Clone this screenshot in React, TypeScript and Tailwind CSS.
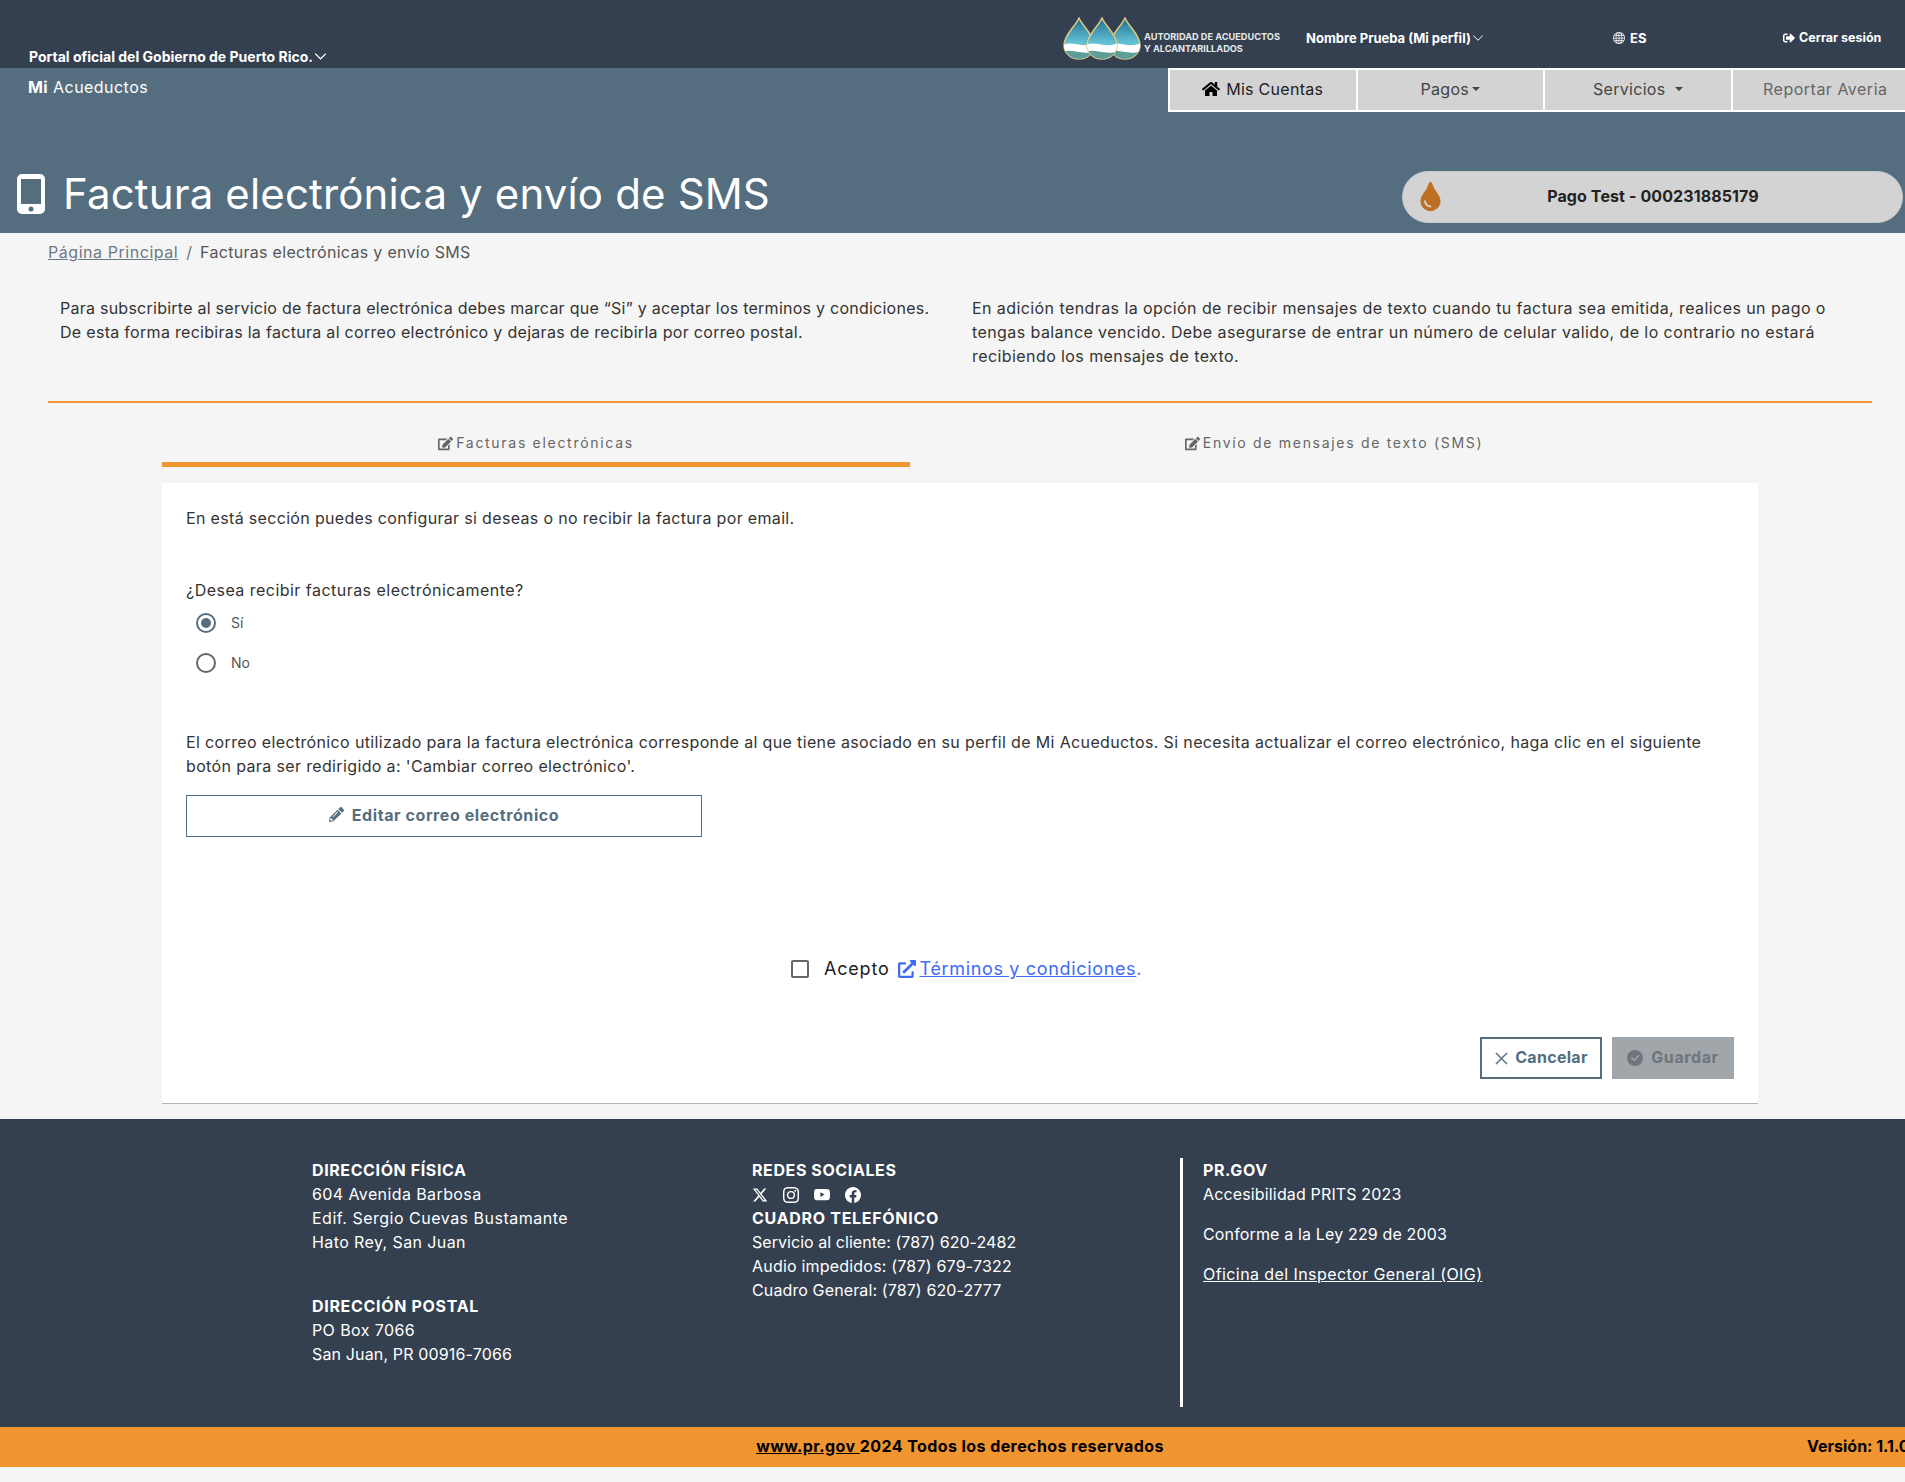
import { BsCheckCircleFill, BsChevronDown, BsFacebook, BsGlobe, BsInstagram, BsXLg, BsYoutube } from "react-icons/bs"
import { FaEdit, FaExternalLinkAlt, FaHome, FaPencilAlt, FaSignOutAlt, FaTint } from "react-icons/fa"
import { FaXTwitter } from "react-icons/fa6"

function Logo() {
  const drops = [16, 62, 39]
  return (
    <svg width="78" height="44" viewBox="0 0 78 44" className="shrink-0">
      <defs>
        <linearGradient id="drop" x1="0" y1="0" x2="0" y2="1">
          <stop offset="0" stopColor="#1f6f93" />
          <stop offset="0.62" stopColor="#66c3d6" />
        </linearGradient>
      </defs>
      {drops.map((cx) => {
        const d = `M${cx} 1 C${cx + 4} 10 ${cx + 15} 18 ${cx + 15} 28 A15 14 0 0 1 ${cx - 15} 28 C${cx - 15} 18 ${cx - 4} 10 ${cx} 1 Z`
        return (
          <g key={cx}>
            <clipPath id={`c${cx}`}>
              <path d={d} />
            </clipPath>
            <path d={d} fill="url(#drop)" stroke="#dcc67e" strokeWidth="1.6" />
            <g clipPath={`url(#c${cx})`}>
              <path d={`M${cx - 16} 28 C${cx - 8} 23 ${cx + 4} 32 ${cx + 16} 26 V44 H${cx - 16} Z`} fill="#ffffff" />
              <path d={`M${cx - 16} 35 C${cx - 8} 31 ${cx + 4} 39 ${cx + 16} 34 V44 H${cx - 16} Z`} fill="#5f9d98" />
            </g>
          </g>
        )
      })}
    </svg>
  )
}

function NavItem({ children, className }: { children: React.ReactNode; className: string }) {
  return (
    <div className={`flex h-full w-[187.5px] items-center justify-center border-l-2 border-white pb-[2px] text-[16px] tracking-[0.3px] ${className}`}>
      {children}
    </div>
  )
}

function Caret() {
  return <span className="ml-[3px] inline-block border-x-[4px] border-t-[4px] border-x-transparent border-t-[#444]"></span>
}

function Radio({ checked, label }: { checked?: boolean; label: string }) {
  return (
    <div className="flex h-10 items-center pl-[10px]">
      <span className={`flex h-5 w-5 items-center justify-center rounded-full border-2 ${checked ? "border-[#546e7f]" : "border-[#666]"}`}>
        {checked && <span className="h-[10px] w-[10px] rounded-full bg-[#546e7f]"></span>}
      </span>
      <span className="ml-[15px] text-[14px] text-[#555]">{label}</span>
    </div>
  )
}

export default function App() {
  return (
    <div className="w-[1905px] h-[1482px] overflow-hidden bg-[#f5f5f5] text-[#212529] text-[16px] leading-6 font-['Inter','Liberation_Sans',sans-serif]">
      {/* barra superior */}
      <div className="flex h-[68px] bg-[#343f4f] text-white font-bold text-[13px]">
        <div className="flex flex-1 items-end pl-[29px] leading-[22px]">
          <span className="text-[14px]">Portal oficial del Gobierno de Puerto Rico.</span>
          <BsChevronDown className="mb-[5px] ml-[1px] text-[13px] stroke-[0.8px]" />
        </div>
        <div className="flex w-[243px] items-center pt-[10px]">
          <Logo />
          <div className="ml-[3px] mt-[7px] whitespace-nowrap text-[9.2px] leading-3 text-[#e6e9ec]">
            AUTORIDAD DE ACUEDUCTOS
            <br />Y ALCANTARILLADOS
          </div>
        </div>
        <div className="flex w-[307px] items-center pt-[7px]">
          <span>Nombre Prueba (Mi perfil)</span>
          <BsChevronDown className="ml-[1px] text-[12px]" />
        </div>
        <div className="flex w-[170px] items-center pt-[7px]">
          <BsGlobe className="mr-[5px] text-[12px]" />
          ES
        </div>
        <div className="mr-[23px] flex w-[99px] items-center pt-[7px]">
          <FaSignOutAlt className="mr-[4px] text-[12px]" />
          <span className="whitespace-nowrap text-[12.5px]">Cerrar sesión</span>
        </div>
      </div>

      {/* cabecera */}
      <div className="flex h-[165px] flex-col justify-between bg-[#546e7f]">
        <div className="flex justify-between">
          <div className="pl-[28px] pt-[7px] text-[16px] text-white tracking-[0.45px]">
            <b className="font-bold">Mi</b> Acueductos
          </div>
          <div className="-mr-[13px] flex h-11 border-y-2 border-white bg-[#d3d3d3]">
            <NavItem className="text-[#222]">
              <FaHome className="mr-[6px] text-[18px] text-black" />
              Mis Cuentas
            </NavItem>
            <NavItem className="text-[#444]">
              Pagos
              <Caret />
            </NavItem>
            <NavItem className="text-[#444]">
              Servicios
              <span className="w-[6px]"></span>
              <Caret />
            </NavItem>
            <NavItem className="text-[#666]">
              <span className="tracking-[0.5px]">Reportar Averia</span>
            </NavItem>
          </div>
        </div>
        <div className="flex items-center justify-between pb-[10px]">
          <div className="flex items-center pl-[17px]">
            <svg width="28" height="40" viewBox="0 0 28 40" className="mb-[5px] shrink-0">
              <path
                fillRule="evenodd"
                fill="#ffffff"
                d="M5 0H23A5 5 0 0 1 28 5V35A5 5 0 0 1 23 40H5A5 5 0 0 1 0 35V5A5 5 0 0 1 5 0ZM4 5V30H24V5ZM14 32.5A2.5 2.5 0 1 0 14 37.5A2.5 2.5 0 1 0 14 32.5Z"
              />
            </svg>
            <h1 className="mb-[5px] ml-[18px] text-[42px] leading-[48px] text-white tracking-[0.15px]">Factura electrónica y envío de SMS</h1>
          </div>
          <div className="mr-[2px] flex h-[52px] w-[501px] items-center rounded-[26px] border border-[#c4c9cd] bg-[#d3d3d3] pl-[13px]">
            <FaTint className="text-[29px] text-[#bf6f24]" />
            <span className="flex-1 pb-[2px] pr-[41px] text-center font-bold text-[16px] text-[#222] tracking-[0.1px]">Pago Test - 000231885179</span>
          </div>
        </div>
      </div>

      {/* migas */}
      <div className="flex h-[38px] items-center pl-[48px] text-[16px] text-[#555]">
        <span className="text-[#6c7a85] underline tracking-[0.55px]">Página Principal</span>
        <span className="mx-2 text-[#6c757d]">/</span>
        <span className="tracking-[0.3px]">Facturas electrónicas y envío SMS</span>
      </div>

      {/* introducción */}
      <div className="mt-[25px] flex text-[#333]">
        <div className="ml-[60px] w-[912px] tracking-[0.25px]">
          Para subscribirte al servicio de factura electrónica debes marcar que “Si” y aceptar los terminos y condiciones.
          <br />
          <span className="tracking-[0.3px]">De esta forma recibiras la factura al correo electrónico y dejaras de recibirla por correo postal.</span>
        </div>
        <div className="w-[866px] tracking-[0.42px]">
          En adición tendras la opción de recibir mensajes de texto cuando tu factura sea emitida, realices un pago o
          <br />
          tengas balance vencido. Debe asegurarse de entrar un número de celular valido, de lo contrario no estará
          <br />
          recibiendo los mensajes de texto.
        </div>
      </div>
      <div className="ml-[48px] mt-[33px] h-[2px] w-[1824px] bg-[#f09530]"></div>

      {/* pestañas */}
      <div className="ml-[162px] flex w-[1596px] text-[14px] text-[#666] tracking-[1.7px]">
        <div className="flex h-16 w-[748px] items-end justify-center border-b-[5px] border-[#f09530] pb-[7px]">
          <div className="flex items-center">
            <FaEdit className="mr-[3px] text-[15px]" />
            Facturas electrónicas
          </div>
        </div>
        <div className="flex h-16 w-[848px] items-end justify-center pb-[12px]">
          <div className="flex items-center">
            <FaEdit className="mr-[3px] text-[15px]" />
            Envío de mensajes de texto (SMS)
          </div>
        </div>
      </div>

      {/* tarjeta */}
      <div className="ml-[162px] mt-4 w-[1596px] border-b border-[#b5b5b5] bg-white px-6 pb-6 pt-[23px] text-[#333]">
        <div className="tracking-[0.33px]">En está sección puedes configurar si deseas o no recibir la factura por email.</div>
        <div className="mt-12 tracking-[0.47px]">¿Desea recibir facturas electrónicamente?</div>
        <div className="mt-px">
          <Radio checked label="Sí" />
          <Radio label="No" />
        </div>
        <div className="mt-[47px] tracking-[0.36px]">
          El correo electrónico utilizado para la factura electrónica corresponde al que tiene asociado en su perfil de Mi Acueductos. Si necesita actualizar el correo electrónico, haga clic en el siguiente
          <br />
          botón para ser redirigido a: 'Cambiar correo electrónico'.
        </div>
        <div className="mt-[17px] flex h-[42px] w-[516px] items-center justify-center border border-[#546e7f] pb-[3px] font-bold text-[#546e7f] tracking-[0.58px]">
          <FaPencilAlt className="mr-[8px] text-[15px]" />
          Editar correo electrónico
        </div>
        <div className="mt-[120px] flex h-6 items-center pl-[605px]">
          <span className="h-[18px] w-[18px] rounded-[2px] border-2 border-[#666]"></span>
          <span className="ml-[15px] text-[18px] text-[#222] tracking-[0.8px]">Acepto</span>
          <FaExternalLinkAlt className="ml-2 text-[18px] text-[#3f6bf5]" />
          <span className="ml-1 text-[18px] text-[#3f6bf5] underline tracking-[0.66px]">Términos y condiciones</span>
          <span className="text-[18px] text-[#3f6bf5]">.</span>
        </div>
        <div className="mt-14 flex justify-end gap-[10px]">
          <div className="flex h-[42px] w-[122px] items-center justify-center border-2 border-[#546e7f] pb-[3px] font-bold text-[#546e7f] tracking-[0.3px]">
            <BsXLg className="mr-[6px] mt-[3px] text-[15px] stroke-[0.6px]" />
            Cancelar
          </div>
          <div className="flex h-[42px] w-[122px] items-center justify-center bg-[#a1a6aa] pb-[3px] font-bold text-[#6f757a] tracking-[0.6px]">
            <BsCheckCircleFill className="mr-[8px] mt-[3px] text-[16px]" />
            Guardar
          </div>
        </div>
      </div>

      {/* pie */}
      <div className="mt-[15px] flex h-[308px] bg-[#343f4f] pl-[312px] pt-[39px] text-white">
        <div className="w-[440px] tracking-[0.4px]">
          <div className="font-bold tracking-[0.6px]">DIRECCIÓN FÍSICA</div>
          <div>604 Avenida Barbosa</div>
          <div className="tracking-[0.5px]">Edif. Sergio Cuevas Bustamante</div>
          <div>Hato Rey, San Juan</div>
          <div className="mt-10 font-bold tracking-[0.68px]">DIRECCIÓN POSTAL</div>
          <div>PO Box 7066</div>
          <div className="tracking-[0.15px]">San Juan, PR 00916-7066</div>
        </div>
        <div className="w-[428px]">
          <div className="font-bold tracking-[0.6px]">REDES SOCIALES</div>
          <div className="flex h-6 items-center gap-[15px] pt-[2px] text-[16px]">
            <FaXTwitter />
            <BsInstagram />
            <BsYoutube />
            <BsFacebook />
          </div>
          <div className="font-bold tracking-[0.7px]">CUADRO TELEFÓNICO</div>
          <div className="tracking-[0.05px]">Servicio al cliente: (787) 620-2482</div>
          <div className="tracking-[0.2px]">Audio impedidos: (787) 679-7322</div>
          <div className="tracking-[0.12px]">Cuadro General: (787) 620-2777</div>
        </div>
        <div className="h-[249px] border-l-[3px] border-white pl-5">
          <div className="font-bold tracking-[0.6px]">PR.GOV</div>
          <div className="tracking-[0.15px]">Accesibilidad PRITS 2023</div>
          <div className="mt-4 tracking-[0.15px]">Conforme a la Ley 229 de 2003</div>
          <div className="mt-4 underline tracking-[0.42px]">Oficina del Inspector General (OIG)</div>
        </div>
      </div>
      <div className="relative flex h-10 items-center justify-center bg-[#f09530] pb-[3px] pl-[15px] font-bold text-black tracking-[0.42px]">
        <span>
          <span className="underline">www.pr.gov </span>2024 Todos los derechos reservados
        </span>
        <span className="absolute left-[1807px] whitespace-nowrap tracking-normal">Versión: 1.1.0</span>
      </div>
    </div>
  )
}
